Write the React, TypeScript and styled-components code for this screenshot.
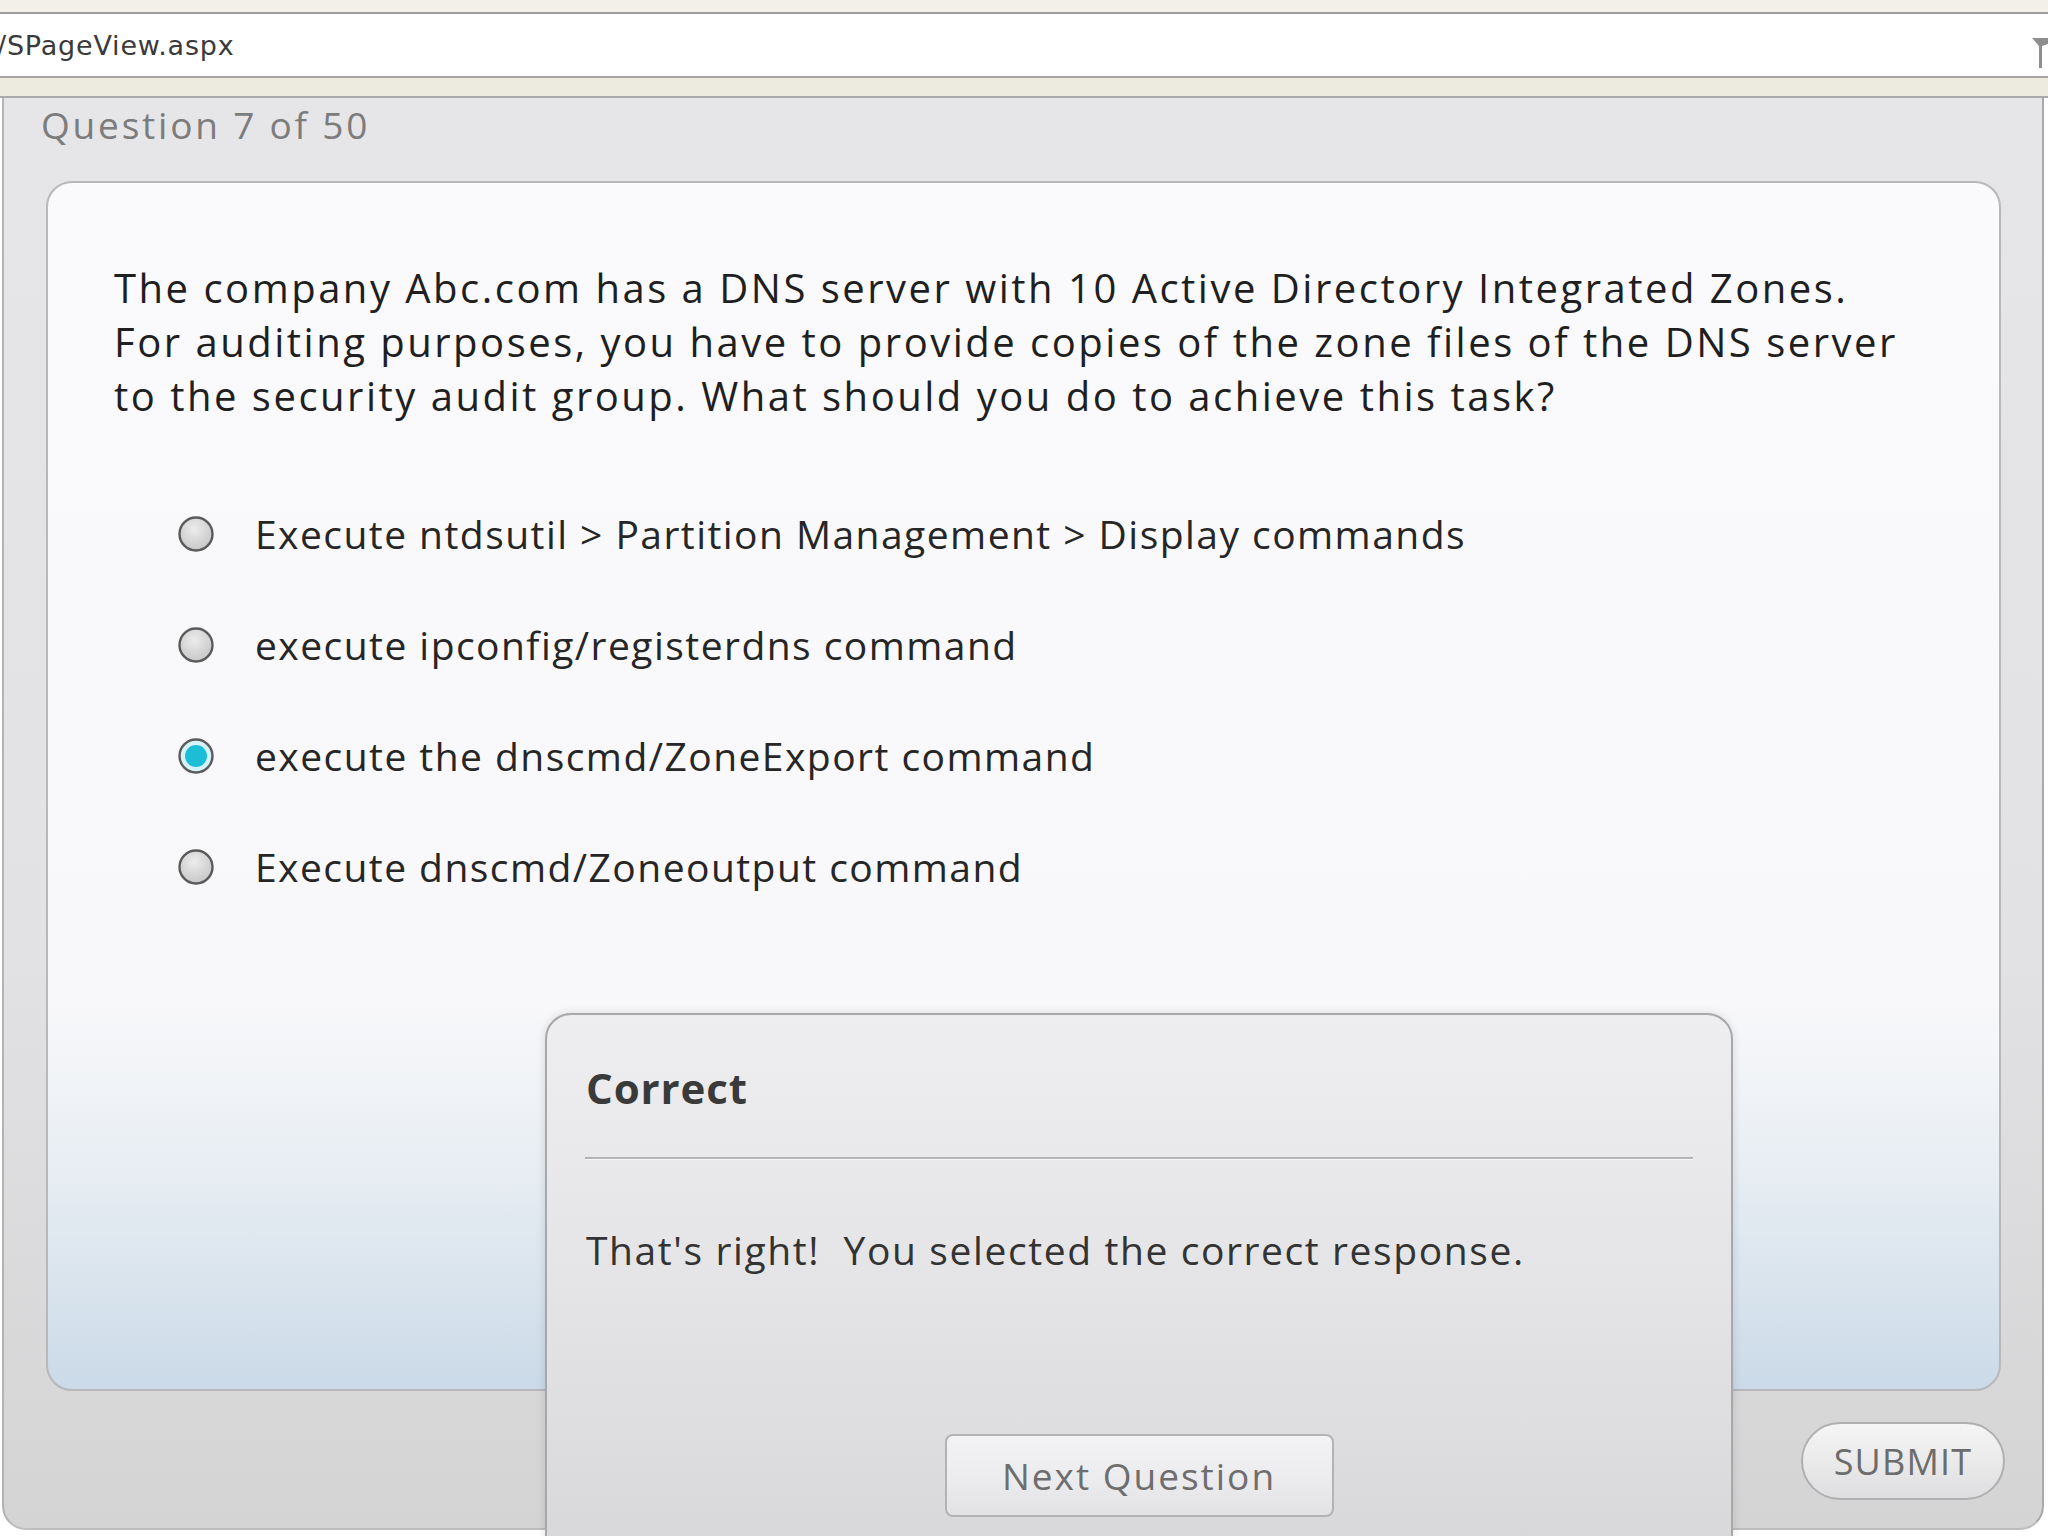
import React, { useState } from 'react';
import styled, { createGlobalStyle } from 'styled-components';

const GlobalStyle = createGlobalStyle`
  html, body {
    margin: 0;
    padding: 0;
    width: 2048px;
    height: 1536px;
    overflow: hidden;
    background: #ffffff;
  }
  * { box-sizing: border-box; }
`;

const UI_FONT = `"Open Sans", "Noto Sans", "Liberation Sans", sans-serif`;

const OPTIONS = [
  'Execute ntdsutil > Partition Management > Display commands',
  'execute ipconfig/registerdns command',
  'execute the dnscmd/ZoneExport command',
  'Execute dnscmd/Zoneoutput command',
];

function Radio({ checked }: { checked: boolean }) {
  return (
    <svg width="38" height="38" viewBox="0 0 38 38">
      <defs>
        <radialGradient id="rgOff" cx="45%" cy="35%" r="70%">
          <stop offset="0%" stopColor="#ececec" />
          <stop offset="100%" stopColor="#c4c4c4" />
        </radialGradient>
      </defs>
      <circle cx="19" cy="19" r="16.5" fill={checked ? '#d6f3f8' : 'url(#rgOff)'} stroke="#5a5a5a" strokeWidth="2.4" />
      {checked && <circle cx="19" cy="19" r="11" fill="#1cbdd6" />}
    </svg>
  );
}

function App() {
  const [selected, setSelected] = useState(2);
  return (
    <>
      <GlobalStyle />
      <Page>
        <TopStrip />
        <AddressBar>
          <UrlText>/SPageView.aspx</UrlText>
          <DropIcon width="16" height="32" viewBox="0 0 16 32">
            <path d="M0 2 L16 2 L16 8 L10 10 L10 32 L7 32 L7 10 Z" fill="#8e8e8e" />
          </DropIcon>
        </AddressBar>
        <BarStrip />
        <Panel>
          <QuestionCount>Question 7 of 50</QuestionCount>
          <Card>
            <QuestionText>
              The company Abc.com has a DNS server with 10 Active Directory Integrated Zones.
              <br />
              For auditing purposes, you have to provide copies of the zone files of the DNS server
              <br />
              to the security audit group. What should you do to achieve this task?
            </QuestionText>
            <OptionList>
              {OPTIONS.map((opt, i) => (
                <OptionRow key={i} onClick={() => setSelected(i)}>
                  <Radio checked={selected === i} />
                  <OptionLabel>{opt}</OptionLabel>
                </OptionRow>
              ))}
            </OptionList>
          </Card>
          <Footer>
            <SubmitButton>SUBMIT</SubmitButton>
          </Footer>
        </Panel>
        <Feedback>
          <FeedbackTitle>Correct</FeedbackTitle>
          <Divider />
          <FeedbackBody>That's right!&nbsp; You selected the correct response.</FeedbackBody>
          <FeedbackActions>
            <NextButton>Next Question</NextButton>
          </FeedbackActions>
        </Feedback>
      </Page>
    </>
  );
}

const Page = styled.div`
  position: relative;
  width: 2048px;
  height: 1536px;
  display: flex;
  flex-direction: column;
  font-family: ${UI_FONT};
`;

const TopStrip = styled.div`
  height: 14px;
  background: #f2f0e8;
  border-bottom: 2px solid #9d9d9d;
`;

const AddressBar = styled.div`
  position: relative;
  height: 64px;
  background: #ffffff;
  border-bottom: 2px solid #a3a3a3;
  display: flex;
  align-items: center;
  overflow: hidden;
`;

const UrlText = styled.span`
  margin-left: -3px;
  font-family: "DejaVu Sans", "Liberation Sans", sans-serif;
  font-size: 27px;
  color: #3a3a3a;
  letter-spacing: 0.8px;
`;

const DropIcon = styled.svg`
  position: absolute;
  right: 0;
  top: 22px;
`;

const BarStrip = styled.div`
  height: 20px;
  background: #edebe0;
  border-bottom: 2px solid #a9a9a9;
`;

const Panel = styled.div`
  width: 2042px;
  height: 1432px;
  margin-left: 2px;
  display: flex;
  flex-direction: column;
  border-left: 2px solid #b3b3b3;
  border-right: 2px solid #a9a9a9;
  border-bottom: 2px solid #bdbdbd;
  border-radius: 0 0 24px 24px;
  background: linear-gradient(to bottom, #e6e6e8 0%, #e2e2e4 60%, #d4d4d5 100%);
`;

const QuestionCount = styled.div`
  height: 83px;
  padding: 2px 0 0 37px;
  font-size: 37px;
  line-height: 50px;
  color: #7c7c7c;
  letter-spacing: 2.8px;
`;

const Card = styled.div`
  width: 1955px;
  height: 1210px;
  margin-left: 42px;
  border: 2px solid #b8b8bc;
  border-radius: 26px;
  padding: 78px 0 0 66px;
  background: linear-gradient(
    to bottom,
    #fafafc 0%,
    #f8f8fa 68%,
    #eaeff4 80%,
    #dbe5ee 90%,
    #cbdae8 100%
  );
`;

const QuestionText = styled.div`
  font-size: 40px;
  line-height: 54px;
  color: #1f1f1f;
  letter-spacing: 2.5px;
  white-space: nowrap;
`;

const OptionList = styled.div`
  margin-top: 55px;
  display: flex;
  flex-direction: column;
`;

const OptionRow = styled.label`
  height: 111px;
  display: flex;
  align-items: center;
  gap: 40px;
  padding-left: 63px;
  cursor: pointer;
`;

const OptionLabel = styled.span`
  font-size: 39px;
  color: #262626;
  letter-spacing: 1.45px;
`;

const Footer = styled.div`
  flex: 1;
  display: flex;
  justify-content: flex-end;
  align-items: flex-start;
  padding: 31px 37px 0 0;
`;

const SubmitButton = styled.button`
  width: 204px;
  height: 78px;
  border: 2px solid #b0b0b2;
  border-radius: 39px;
  background: linear-gradient(to bottom, #f5f5f5 0%, #e9e9ea 55%, #dedee0 100%);
  font-family: ${UI_FONT};
  font-size: 36px;
  color: #6c6c6c;
  letter-spacing: 1.2px;
  cursor: pointer;
`;

const Feedback = styled.div`
  position: absolute;
  left: 545px;
  top: 1013px;
  width: 1188px;
  height: 560px;
  border: 2px solid #a8a8aa;
  border-radius: 26px 26px 0 0;
  background: linear-gradient(to bottom, #eeeef0 0%, #e4e4e6 50%, #d7d7d9 100%);
  box-shadow: 0 0 10px rgba(0, 0, 0, 0.12);
  padding: 0 38px;
  display: flex;
  flex-direction: column;
`;

const FeedbackTitle = styled.div`
  height: 142px;
  padding: 44px 0 0 1px;
  font-size: 42px;
  font-weight: 700;
  line-height: 58px;
  color: #3a3a3a;
  letter-spacing: 0.9px;
`;

const Divider = styled.div`
  height: 3px;
  border-top: 2px solid #b4b4b6;
  border-bottom: 1px solid #f6f6f6;
`;

const FeedbackBody = styled.div`
  padding: 63px 0 0 1px;
  font-size: 39px;
  line-height: 54px;
  color: #333333;
  letter-spacing: 1.6px;
`;

const FeedbackActions = styled.div`
  display: flex;
  justify-content: center;
  margin-top: 157px;
`;

const NextButton = styled.button`
  width: 389px;
  height: 83px;
  border: 2px solid #b3b3b5;
  border-radius: 8px;
  background: linear-gradient(to bottom, #f3f3f5 0%, #ebebed 60%, #e2e2e4 100%);
  font-family: ${UI_FONT};
  font-size: 37px;
  color: #6e6e6e;
  letter-spacing: 2px;
  cursor: pointer;
`;

export default App;
